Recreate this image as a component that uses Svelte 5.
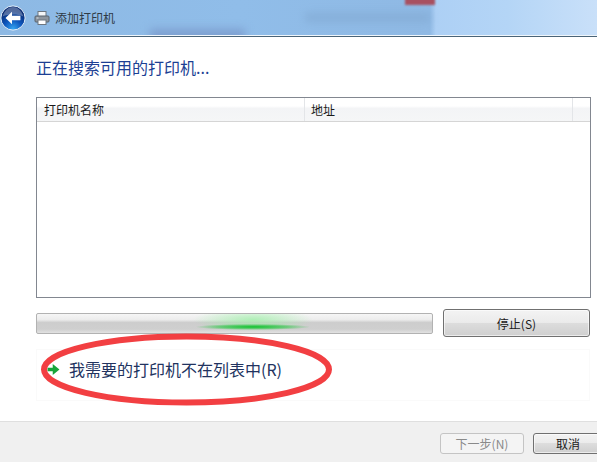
<script lang="ts">
	let columns = [
		{ name: '打印机名称', width: 268 },
		{ name: '地址', width: 268 }
	];
</script>

<div class="wizard">
	<header class="title-bar">
		<div class="blur blur-a"></div>
		<div class="blur blur-b"></div>
		<div class="blur blur-c"></div>
		<button class="back-btn" aria-label="返回">
			<svg viewBox="0 0 26 26" width="26" height="26">
				<defs>
					<radialGradient id="orb" cx="50%" cy="95%" r="75%">
						<stop offset="0" stop-color="#35a6f2" />
						<stop offset="0.5" stop-color="#0d56bd" />
						<stop offset="1" stop-color="#0a2c73" />
					</radialGradient>
				</defs>
				<circle cx="13" cy="13" r="12.1" fill="url(#orb)" stroke="#e2edf8" stroke-width="1" />
				<path d="M2.6 11.5C4.5 5 9 2 13 2s8.5 3 10.4 9.5c-6-2.6-14.8-2.6-20.8 0z" fill="#ffffff" opacity="0.3" />
				<path d="M5.5 13l6.5-6.2v3.9h8.4v4.6H12v3.9z" fill="#ffffff" />
			</svg>
		</button>
		<svg class="printer" viewBox="0 0 16 16" width="16" height="16">
			<rect x="4" y="1.5" width="8" height="5" fill="#f4f6f8" stroke="#6d7680" />
			<rect x="1" y="6" width="14" height="6" rx="1" fill="#8d959e" stroke="#59626c" />
			<rect x="4" y="10" width="8" height="4.5" fill="#ffffff" stroke="#6d7680" />
			<rect x="2.5" y="7.5" width="2" height="1" fill="#d8dde2" />
		</svg>
		<span class="window-title">添加打印机</span>
	</header>

	<main class="body">
		<h1>正在搜索可用的打印机...</h1>

		<div class="list">
			<div class="list-head">
				{#each columns as col}
					<div class="col" style="width: {col.width}px">{col.name}</div>
				{/each}
				<div class="col filler"></div>
			</div>
		</div>

		<div class="progress-row">
			<div class="progress"><div class="glow"></div></div>
			<button class="btn stop">停止(S)</button>
		</div>

		<div class="link-box">
			<svg class="arrow" viewBox="0 0 12 12" width="13" height="13">
				<path d="M0.5 4.4h4.8V1L11.5 6l-6.2 5V7.6H0.5z" fill="#18a53a" />
			</svg>
			<span class="link">我需要的打印机不在列表中(R)</span>
		</div>
	</main>

	<footer class="footer">
		<button class="btn next" disabled>下一步(N)</button>
		<button class="btn cancel">取消</button>
	</footer>

	<svg class="circle-mark" viewBox="0 0 597 462" width="597" height="462">
		<ellipse cx="186.5" cy="369.5" rx="142.5" ry="33" fill="none" stroke="#f23f42" stroke-width="6" />
	</svg>
</div>

<style>
	:global(body) {
		margin: 0;
		background: #ffffff;
	}

	.wizard {
		position: relative;
		width: 597px;
		height: 462px;
		overflow: hidden;
		display: flex;
		flex-direction: column;
		background: #ffffff;
		font-family: "Noto Sans CJK SC", "Liberation Sans", sans-serif;
		font-size: 12px;
		color: #1a1a1a;
	}

	.title-bar {
		position: relative;
		flex: none;
		height: 36px;
		box-sizing: border-box;
		display: flex;
		align-items: center;
		gap: 7px;
		overflow: hidden;
		background: linear-gradient(90deg, #8db9e4 0%, #90bde9 40%, #8fb9e4 72%, #add0f5 73%, #b4d5f6 85%, #c9e0f9 100%);
		border-bottom: 1px solid #f0f6fb;
		box-shadow: 0 1px 0 #4a6478;
		margin-bottom: 1px;
	}

	.blur {
		position: absolute;
		filter: blur(4px);
	}

	.blur-a {
		left: 150px;
		width: 95px;
		bottom: -6px;
		height: 12px;
		background: #7d9fd0;
	}

	.blur-b {
		left: 305px;
		width: 125px;
		top: 13px;
		height: 9px;
		background: #7fa6cf;
		opacity: 0.6;
	}

	.blur-c {
		left: 405px;
		width: 30px;
		top: -6px;
		height: 11px;
		background: #a85060;
		filter: blur(1px);
	}

	.back-btn {
		position: relative;
		flex: none;
		width: 26px;
		height: 26px;
		padding: 0;
		border: none;
		background: none;
		display: block;
	}

	.back-btn svg {
		display: block;
	}

	.printer {
		position: relative;
		flex: none;
		margin-left: 1px;
	}

	.window-title {
		position: relative;
		color: #2f3a46;
		margin-left: -2px;
	}

	.body {
		flex: 1;
		display: flex;
		flex-direction: column;
		padding: 0 7px 0 36px;
	}

	h1 {
		margin: 19px 0 0;
		height: 41px;
		font-size: 16px;
		line-height: 22px;
		font-weight: 400;
		color: #1c3f94;
	}

	.list {
		box-sizing: border-box;
		width: 555px;
		height: 201px;
		border: 1px solid #828790;
	}

	.list-head {
		display: flex;
		height: 24px;
		box-sizing: border-box;
		border-bottom: 1px solid #d5d5d5;
		background: linear-gradient(#ffffff 0%, #ffffff 35%, #f3f4f6 45%, #f5f6f7 100%);
	}

	.col {
		box-sizing: border-box;
		padding-left: 7px;
		line-height: 24px;
		border-right: 1px solid #e3e5e8;
	}

	.col + .col {
		padding-left: 6px;
	}

	.filler {
		flex: 1;
		border-right: none;
	}

	.progress-row {
		display: flex;
		align-items: center;
		gap: 10px;
		margin-top: 11px;
		height: 28px;
		width: 554px;
	}

	.progress {
		position: relative;
		flex: none;
		width: 397px;
		height: 21px;
		box-sizing: border-box;
		overflow: hidden;
		border: 1px solid #b2b2b2;
		border-radius: 2px;
		background: linear-gradient(#f6f6f6 0%, #ececec 30%, #cdcdcd 45%, #cfcfcf 80%, #e2e2e2 100%);
	}

	.glow {
		position: absolute;
		left: 156px;
		width: 120px;
		top: 0;
		bottom: 0;
		background:
			radial-gradient(ellipse 48% 16% at 50% 68%, #0fc32c 0%, rgba(15, 195, 44, 0.5) 60%, rgba(15, 195, 44, 0) 100%),
			radial-gradient(ellipse 50% 60% at 50% 30%, rgba(150, 240, 160, 0.7) 0%, rgba(150, 240, 160, 0) 100%);
	}

	.btn {
		box-sizing: border-box;
		padding: 0;
		font: inherit;
		color: #1a1a1a;
		border: 1px solid #707070;
		border-radius: 3px;
		background: linear-gradient(#f3f3f3 0%, #ebebeb 48%, #dddddd 50%, #cfcfcf 100%);
		box-shadow: inset 0 0 0 1px rgba(255, 255, 255, 0.6);
	}

	.stop {
		flex: none;
		width: 147px;
		height: 28px;
	}

	.link-box {
		display: flex;
		align-items: center;
		gap: 9px;
		box-sizing: border-box;
		margin-top: 12px;
		width: 554px;
		height: 52px;
		padding: 0 0 12px 10px;
		border: 1px solid #fafafa;
	}

	.arrow {
		flex: none;
	}

	.link {
		font-size: 16px;
		line-height: 22px;
		color: #22335f;
	}

	.footer {
		flex: none;
		height: 41px;
		box-sizing: border-box;
		display: flex;
		align-items: flex-start;
		gap: 9px;
		padding: 11px 0 0 440px;
		background: #f0f0f0;
		border-top: 1px solid #dfdfdf;
	}

	.next {
		flex: none;
		width: 84px;
		height: 21px;
		color: #8a8a8a;
		background: #f4f4f4;
		border-color: #c4c4c4;
		box-shadow: none;
	}

	.cancel {
		flex: none;
		width: 70px;
		height: 21px;
	}

	.circle-mark {
		position: absolute;
		left: 0;
		top: 0;
		pointer-events: none;
	}
</style>
